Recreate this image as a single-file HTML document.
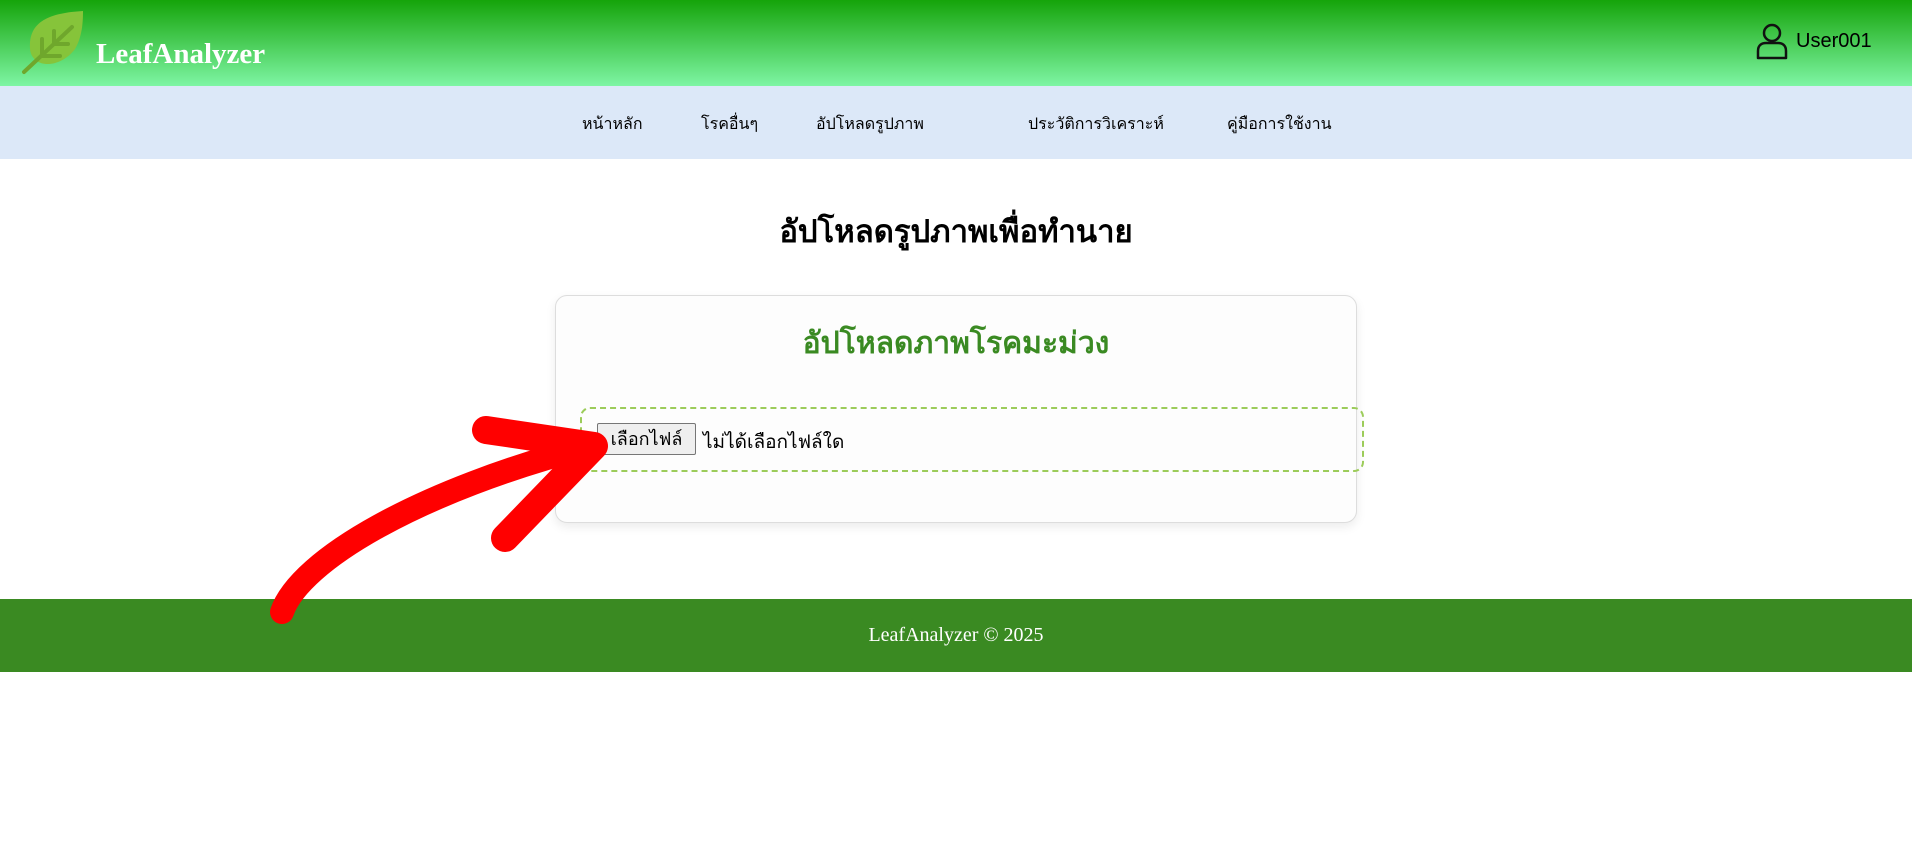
<!DOCTYPE html>
<html><head><meta charset="utf-8"><style>
*{margin:0;padding:0;box-sizing:border-box}
body{width:1912px;height:844px;background:#fff;position:relative;overflow:hidden;font-family:"Liberation Sans","Noto Sans CJK SC",sans-serif}
.hdr{position:absolute;left:0;top:0;width:1912px;height:86px;background:linear-gradient(#15a40a,#7ef5a4)}
.logo{position:absolute;left:96px;top:38px;font:bold 29px "Liberation Serif",serif;color:#fff}
.user{position:absolute;left:1796px;top:30px;font-size:20px;color:#000}
.nav{position:absolute;left:0;top:86px;width:1912px;height:73px;background:#dce8f8}
.nav span{position:absolute;top:26px;font-size:16px;color:#000}
h1{position:absolute;left:0;width:1912px;top:206px;text-align:center;font-size:31px;font-weight:bold}
.card{position:absolute;left:555px;top:295px;width:802px;height:228px;background:#fdfdfd;border:1px solid #ddd;border-radius:12px;box-shadow:0 4px 10px rgba(0,0,0,.08)}
.card h2{position:absolute;left:0;width:100%;top:24px;text-align:center;color:#3a8a22;font-size:30px}
.drop{position:absolute;left:580px;top:407px;width:784px;height:65px;border:2px dashed #9ccc5a;border-radius:10px}
.btn{position:absolute;left:597px;top:423px;width:99px;height:32px;background:#efefef;border:1px solid #767676;border-radius:2px;font-size:18px;text-align:center;line-height:30px}
.nf{position:absolute;left:703px;top:427px;font-size:19px}
.foot{position:absolute;left:0;top:599px;width:1912px;height:73px;background:#3a8a22;color:#fff;font:20px "Liberation Serif",serif;text-align:center;line-height:73px}
</style></head><body>
<div class="hdr">
<svg style="position:absolute;left:20px;top:9px" width="66" height="66" viewBox="0 0 66 66">
<path d="M63 2 C30 4 8 12 10 40 C12 60 40 60 55 40 C62 28 63 14 63 2Z" fill="#86c43a"/>
<path d="M4 63 L52 18 M22 47 V30 M22 47 H40 M34 35 V22 M34 35 H48" stroke="#6fa72c" stroke-width="4" stroke-linecap="round" fill="none"/>
</svg>
<div class="logo">LeafAnalyzer</div>
<svg style="position:absolute;left:1756px;top:23px" width="32" height="38" viewBox="0 0 32 38"><circle cx="16" cy="10" r="8" fill="none" stroke="#111" stroke-width="2.5"/><path d="M2 35 V28 C2 22 6 20 10 20 H22 C26 20 30 22 30 28 V35 Z" fill="none" stroke="#111" stroke-width="2.5" stroke-linejoin="round"/></svg>
<div class="user">User001</div>
</div>
<div class="nav">
<span style="left:582px">หน้าหลัก</span><span style="left:701px">โรคอื่นๆ</span><span style="left:816px">อัปโหลดรูปภาพ</span><span style="left:1028px">ประวัติการวิเคราะห์</span><span style="left:1227px">คู่มือการใช้งาน</span>
</div>
<h1>อัปโหลดรูปภาพเพื่อทำนาย</h1>
<div class="card"><h2>อัปโหลดภาพโรคมะม่วง</h2></div>
<div class="drop"></div>
<div class="btn">เลือกไฟล์</div>
<div class="nf">ไม่ได้เลือกไฟล์ใด</div>
<div class="foot">LeafAnalyzer © 2025</div>
<svg style="position:absolute;left:0;top:0" width="1912" height="844"><g stroke="#f00" fill="none" stroke-linecap="round" stroke-linejoin="round">
<path d="M282 612 C300 560 420 490 590 446" stroke-width="24"/>
<path d="M486 430 L594 446 L505 538" stroke-width="28"/>
</g></svg>
</body></html>
